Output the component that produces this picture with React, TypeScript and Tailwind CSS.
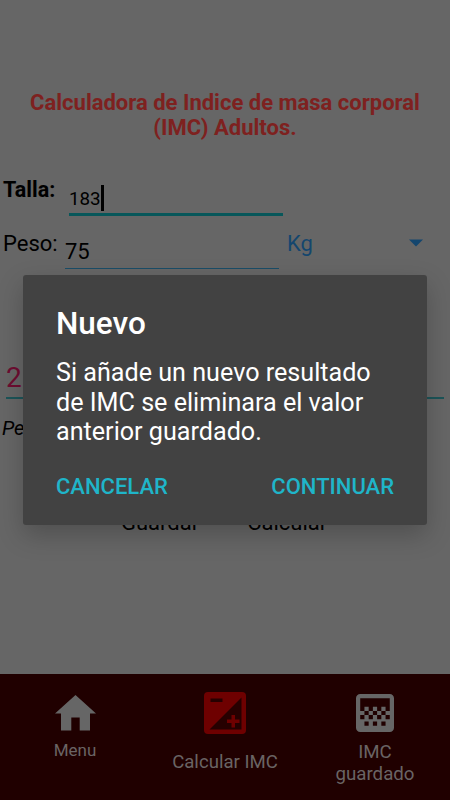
import React from "react";

function HomeIcon() {
  return (
    <svg width="41" height="36" viewBox="0 0 41 36" fill="#666666">
      <path d="M20.5 0 41 18.5H35V35.5H24.7V22.5H16.3V35.5H6V18.5H0Z" />
    </svg>
  );
}

function ExposureIcon() {
  return (
    <svg width="42" height="42" viewBox="0 0 42 42">
      <rect width="42" height="42" rx="4" fill="#6e0000" />
      <path d="M37.5 5.5V37.5H5.5Z" fill="#260000" />
      <path d="M6.5 6.5H18.5V10H6.5Z" fill="#260000" />
      <path d="M27.5 23h3.5v4.5h4.5v3.5H31v4.5h-3.5v-4.5H23v-3.5h4.5z" fill="#6e0000" />
    </svg>
  );
}

function GradientIcon() {
  return (
    <svg width="38" height="38" viewBox="3 3 18 18" fill="#666666">
      <path d="M11 9h2v2h-2zm-2 2h2v2H9zm4 0h2v2h-2zm2-2h2v2h-2zM7 9h2v2H7zm12-6H5c-1.1 0-2 .9-2 2v14c0 1.1.9 2 2 2h14c1.1 0 2-.9 2-2V5c0-1.1-.9-2-2-2zM9 18H7v-2h2v2zm4 0h-2v-2h2v2zm4 0h-2v-2h2v2zm2-7h-2v2h2v2h-2v-2h-2v2h-2v-2h-2v2H9v-2H7v2H5v-2h2v-2H5V5h14v6z" />
    </svg>
  );
}

export default function App() {
  return (
    <div className="relative flex h-[800px] w-[450px] flex-col overflow-hidden bg-[#666666] font-['Roboto',sans-serif] text-black">
      <main className="flex h-[674px] flex-col">
        <h1 className="mt-[90px] h-[50px] text-center text-[22px] leading-[25px] font-bold whitespace-nowrap text-[#7e211f]">
          Calculadora de Indice de masa corporal
          <br />
          (IMC) Adultos.
        </h1>

        <div className="mt-[34px] flex h-[42px] pl-[3px]">
          <span className="w-[66px] pt-[3px] text-[21.5px] leading-[25px] font-bold">Talla:</span>
          <div className="flex h-[42px] w-[214px] items-start border-b-[3px] border-[#07575a] pt-[11px]">
            <span className="pt-[3px] text-[18.8px] leading-[22px]">183</span>
            <span className="h-[26px] w-[3px] bg-black" />
          </div>
        </div>

        <div className="flex h-[53px] pl-[3px]">
          <span className="w-[62px] pt-[15px] text-[22px] leading-[26px]">Peso:</span>
          <div className="h-[53px] w-[214px] border-b border-[#1a4d68] pt-[23px] text-[22px] leading-[26px]">75</div>
          <div className="flex h-[53px] flex-1 justify-between pr-[27px] pl-2 text-[#14466e]">
            <span className="pt-[15px] text-[22px] leading-[26px]">Kg</span>
            <svg className="mt-[23px]" width="14" height="8" viewBox="0 0 14 8" fill="currentColor">
              <path d="M0 .5H14L7 7.5Z" />
            </svg>
          </div>
        </div>

        <div className="mx-1.5 mt-[91px] h-[39px] border-b-2 border-[#1c5458] text-[28px] leading-[36px] text-[#6e0d31]">2</div>
        <p className="mt-[16px] pl-[2px] text-[20px] leading-[26px] italic">Pe</p>

        <div className="mt-[69px] flex gap-[48px] pl-[121px] text-[22px] leading-[26px]">
          <span>Guardar</span>
          <span>Calcular</span>
        </div>
      </main>

      <nav className="grid h-[126px] grid-cols-3 bg-[#200000] text-[#6a6464]">
        <div className="flex flex-col items-center pt-[21px]">
          <HomeIcon />
          <span className="mt-[9px] text-[17px] leading-[21px]">Menu</span>
        </div>
        <div className="flex flex-col items-center pt-[18px]">
          <ExposureIcon />
          <span className="mt-[17px] text-[18.6px] leading-[22px]">Calcular IMC</span>
        </div>
        <div className="flex flex-col items-center pt-[20px]">
          <GradientIcon />
          <span className="mt-[9px] text-center text-[18.7px] leading-[22px]">
            IMC
            <br />
            guardado
          </span>
        </div>
      </nav>

      <section
        role="dialog"
        className="absolute top-[275px] left-[23px] flex h-[250px] w-[404px] flex-col rounded-[3px] bg-[#424242] px-[33px] text-white shadow-[0_10px_26px_rgba(0,0,0,0.22)]"
      >
        <h2 className="mt-[31px] text-[31.5px] leading-[36px] font-medium">Nuevo</h2>
        <p className="mt-[16px] text-[25.15px] leading-[29.5px] whitespace-nowrap">
          Si añade un nuevo resultado
          <br />
          de IMC se eliminara el valor
          <br />
          anterior guardado.
        </p>
        <div className="mt-[27px] flex justify-between text-[22px] leading-[26px] font-medium text-[#1fb5c9]">
          <button>CANCELAR</button>
          <button>CONTINUAR</button>
        </div>
      </section>
    </div>
  );
}
